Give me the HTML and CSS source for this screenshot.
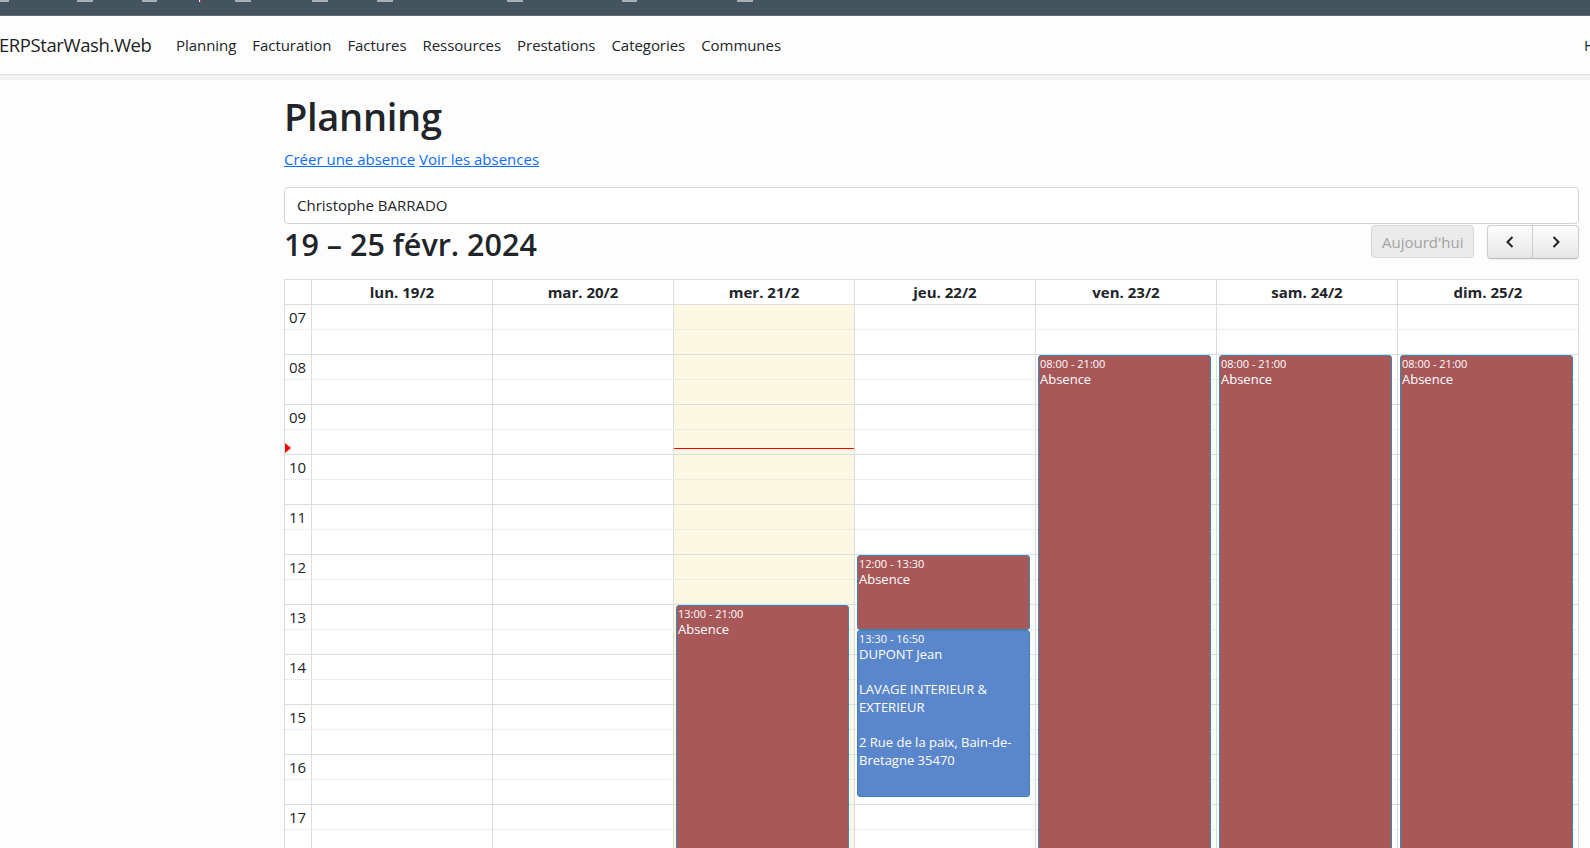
FILE: index.html
```html
<!DOCTYPE html>
<html lang="fr">
<head>
<meta charset="utf-8">
<title>Planning - ERPStarWash.Web</title>
<link rel="stylesheet" href="styles.css">
</head>
<body>
<div class="topbar">
  <svg class="tabs" width="1590" height="15" viewBox="0 0 1590 15">
    <g fill="#a9b0b5">
      <rect x="0" y="0" width="9" height="2"/>
      <rect x="77" y="0" width="16" height="2"/>
      <rect x="142" y="0" width="15" height="2"/>
      <rect x="235" y="0" width="16" height="2"/>
      <rect x="312" y="0" width="16" height="2"/>
      <rect x="377" y="0" width="16" height="2"/>
      <rect x="507" y="0" width="16" height="2"/>
      <rect x="622" y="0" width="15" height="2"/>
      <rect x="737" y="0" width="16" height="2"/>
    </g>
    <rect x="198" y="0" width="1" height="2" fill="#3050c0"/>
    <rect x="199" y="0" width="1" height="2" fill="#ffffff"/>
    <rect x="200" y="0" width="1" height="2" fill="#d03030"/>
  </svg>
</div>
<nav class="navbar">
  <div class="nav-inner">
    <a class="brand" href="#">ERPStarWash.Web</a>
    <ul class="nav-links">
      <li><a href="#">Planning</a></li>
      <li><a href="#">Facturation</a></li>
      <li><a href="#">Factures</a></li>
      <li><a href="#">Ressources</a></li>
      <li><a href="#">Prestations</a></li>
      <li><a href="#">Categories</a></li>
      <li><a href="#">Communes</a></li>
    </ul>
    <div class="nav-right">Hello admin</div>
  </div>
</nav>
<main class="page">
  <h1>Planning</h1>
  <p class="links"><a href="#">Créer une absence</a> <a href="#">Voir les absences</a></p>
  <div class="select">Christophe BARRADO</div>
  <div class="toolbar">
    <h2>19 – 25 févr. 2024</h2>
    <div class="tb-right">
      <button class="btn btn-today" disabled>Aujourd'hui</button>
      <div class="btn-group">
        <button class="btn btn-nav btn-prev" aria-label="prev">
          <svg width="12" height="14" viewBox="0 0 12 14"><path d="M8.5 2 L3.5 7 L8.5 12" fill="none" stroke="#222" stroke-width="2"/></svg>
        </button>
        <button class="btn btn-nav btn-next" aria-label="next">
          <svg width="12" height="14" viewBox="0 0 12 14"><path d="M3.5 2 L8.5 7 L3.5 12" fill="none" stroke="#222" stroke-width="2"/></svg>
        </button>
      </div>
    </div>
  </div>

  <div class="cal">
    <div class="cal-head">
      <div class="ah"></div>
      <div class="dh">lun. 19/2</div>
      <div class="dh">mar. 20/2</div>
      <div class="dh">mer. 21/2</div>
      <div class="dh">jeu. 22/2</div>
      <div class="dh">ven. 23/2</div>
      <div class="dh">sam. 24/2</div>
      <div class="dh">dim. 25/2</div>
    </div>
    <div class="cal-body">
      <div class="layer bgcols">
        <div class="bgaxis"></div>
        <div class="bgcol"></div>
        <div class="bgcol"></div>
        <div class="bgcol today"></div>
        <div class="bgcol"></div>
        <div class="bgcol"></div>
        <div class="bgcol"></div>
        <div class="bgcol"></div>
      </div>
      <div class="layer slots">
        <div class="slot"><span class="lbl">07</span></div><div class="slot"></div>
        <div class="slot"><span class="lbl">08</span></div><div class="slot"></div>
        <div class="slot"><span class="lbl">09</span></div><div class="slot"></div>
        <div class="slot"><span class="lbl">10</span></div><div class="slot"></div>
        <div class="slot"><span class="lbl">11</span></div><div class="slot"></div>
        <div class="slot"><span class="lbl">12</span></div><div class="slot"></div>
        <div class="slot"><span class="lbl">13</span></div><div class="slot"></div>
        <div class="slot"><span class="lbl">14</span></div><div class="slot"></div>
        <div class="slot"><span class="lbl">15</span></div><div class="slot"></div>
        <div class="slot"><span class="lbl">16</span></div><div class="slot"></div>
        <div class="slot"><span class="lbl">17</span></div><div class="slot"></div>
      </div>
      <div class="layer evcols">
        <div class="evcol"><div class="now-arrow"></div></div>
        <div class="evcol"></div>
        <div class="evcol"></div>
        <div class="evcol">
          <div class="now-line"></div>
          <div class="event ev-abs" style="top:300px;height:400px"><div class="ev-time">13:00 - 21:00</div><div class="ev-title">Absence</div></div>
        </div>
        <div class="evcol">
          <div class="event ev-abs" style="top:250px;height:75px"><div class="ev-time">12:00 - 13:30</div><div class="ev-title">Absence</div></div>
          <div class="event ev-job" style="top:325px;height:166.7px"><div class="ev-time">13:30 - 16:50</div><div class="ev-title">DUPONT Jean

LAVAGE INTERIEUR &amp; EXTERIEUR

2 Rue de la paix, Bain-de-Bretagne 35470</div></div>
        </div>
        <div class="evcol">
          <div class="event ev-abs" style="top:50px;height:650px"><div class="ev-time">08:00 - 21:00</div><div class="ev-title">Absence</div></div>
        </div>
        <div class="evcol">
          <div class="event ev-abs" style="top:50px;height:650px"><div class="ev-time">08:00 - 21:00</div><div class="ev-title">Absence</div></div>
        </div>
        <div class="evcol">
          <div class="event ev-abs" style="top:50px;height:650px"><div class="ev-time">08:00 - 21:00</div><div class="ev-title">Absence</div></div>
        </div>
      </div>
    </div>
  </div>
</main>
</body>
</html>
```
FILE: styles.css
```css
html, body {
  margin: 0;
  padding: 0;
  overflow: hidden;
}
body {
  font-family: "Open Sans", "Noto Sans", sans-serif;
  color: #212529;
  background: #fdfdfd;
  width: 1590px;
  height: 848px;
}

/* top dark strip */
.topbar {
  height: 15px;
  background: #44545f;
  border-bottom: 1px solid #5e6d77;
}
.tabs { display: block; }

/* navbar */
.navbar {
  height: 58px;
  background: #fdfdfd;
  border-bottom: 1px solid #dcdce2;
  box-shadow: 0 5px 0 #f3f3f4;
  overflow: hidden;
  position: relative;
}
.nav-inner {
  width: 1784px;
  height: 100%;
  display: flex;
  align-items: center;
}
.brand {
  display: flex;
  justify-content: flex-end;
  width: 170px;
  flex: none;
  margin-left: -18.5px;
  white-space: nowrap;
  font-size: 18.5px;
  letter-spacing: -0.4px;
  line-height: 28px;
  color: rgba(0, 0, 0, 0.9);
  text-decoration: none;
}
.nav-links {
  display: flex;
  list-style: none;
  margin: 0 0 0 16.5px;
  padding: 0;
}
.nav-links a {
  display: block;
  padding: 8px;
  font-size: 15px;
  letter-spacing: -0.05px;
  line-height: 24px;
  color: #212529;
  text-decoration: none;
  white-space: nowrap;
}
.nav-right {
  margin-left: auto;
  width: 200px;
  flex: none;
  font-size: 15px;
  line-height: 24px;
  white-space: nowrap;
}

/* page */
.page {
  margin-left: 284px;
  width: 1295px;
  padding-top: 18px;
}
h1 {
  margin: 0 0 7px;
  font-size: 38px;
  font-weight: 600;
  letter-spacing: -0.3px;
  line-height: 46.8px;
}
.links {
  margin: 0 0 16px;
  font-size: 15px;
  line-height: 24px;
}
.links a {
  color: #0d6efd;
  text-decoration: underline;
}
.select {
  border: 1px solid #ced4da;
  border-radius: 4px;
  padding: 6px 12px;
  font-size: 15px;
  line-height: 23px;
  background: #fff;
}

/* toolbar */
.toolbar {
  display: flex;
  justify-content: space-between;
  align-items: flex-start;
  padding-top: 1px;
  margin-bottom: 16px;
}
.toolbar h2 {
  margin: 1px 0 0;
  font-size: 30.5px;
  font-weight: 600;
  letter-spacing: 0;
  line-height: 37.2px;
}
.tb-right {
  display: flex;
  gap: 12.6px;
}
.btn {
  box-sizing: border-box;
  height: 33.5px;
  font-family: inherit;
  font-size: 15px;
  padding: 0 10px;
  border-radius: 4px;
  margin: 0;
}
.btn-today {
  width: 103.4px;
  background: #ebebeb;
  border: 1px solid #d6d6d6;
  color: #a2a2a2;
}
.btn-group {
  display: flex;
  margin-top: 0.5px;
}
.btn-nav {
  width: 46px;
  display: flex;
  align-items: center;
  justify-content: center;
  background: linear-gradient(#fdfdfd, #e7e7e7);
  border: 1px solid #cfcfcf;
  border-bottom-color: #b9b9b9;
  box-shadow: inset 0 1px 0 rgba(255,255,255,.3), 0 1px 2px rgba(0,0,0,.05);
}
.btn-prev {
  border-radius: 4px 0 0 4px;
}
.btn-next {
  border-radius: 0 4px 4px 0;
  border-left: none;
}
.btn-nav svg { display: block; }

/* calendar */
.cal {
  border: 1px solid #ddd;
  border-bottom: none;
  background: #fff;
}
.cal-head {
  display: grid;
  grid-template-columns: 26px repeat(7, 1fr);
  border-bottom: 1px solid #ddd;
}
.dh {
  border-left: 1px solid #ddd;
  text-align: center;
  font-weight: 700;
  font-size: 15px;
  line-height: 24px;
}
.cal-body {
  display: grid;
}
.layer {
  grid-area: 1 / 1;
}
.bgcols, .evcols {
  display: grid;
  grid-template-columns: 26px repeat(7, 1fr);
}
.bgcol {
  border-left: 1px solid #ddd;
}
.bgcol.today {
  background: #fcf8e3;
}
.slot {
  height: 24px;
  border-bottom: 1px dotted #ddd;
}
.slot:nth-child(even) {
  border-bottom-style: solid;
}
.lbl {
  display: block;
  padding: 1.5px 0 0 4px;
  font-size: 15px;
  line-height: 20px;
}
.evcol {
  position: relative;
}
.now-line {
  position: absolute;
  left: 1px;
  right: 0;
  top: 143px;
  height: 1px;
  background: #f00;
}
.now-arrow {
  position: absolute;
  left: 0;
  top: 138px;
  width: 0;
  height: 0;
  border-left: 6px solid #f00;
  border-top: 5px solid transparent;
  border-bottom: 5px solid transparent;
}
.event {
  position: absolute;
  left: 3px;
  right: 5px;
  box-sizing: border-box;
  border: 1px solid #3a87ad;
  border-radius: 3px;
  color: #fff;
  padding: 0 1px;
  overflow: hidden;
}
.ev-abs { background: #a95859; }
.ev-job { background: #5a86cb; }
.ev-time {
  font-size: 11px;
  line-height: 15px;
  white-space: nowrap;
}
.ev-title {
  font-size: 13px;
  line-height: 17.6px;
  white-space: pre-line;
}
```
